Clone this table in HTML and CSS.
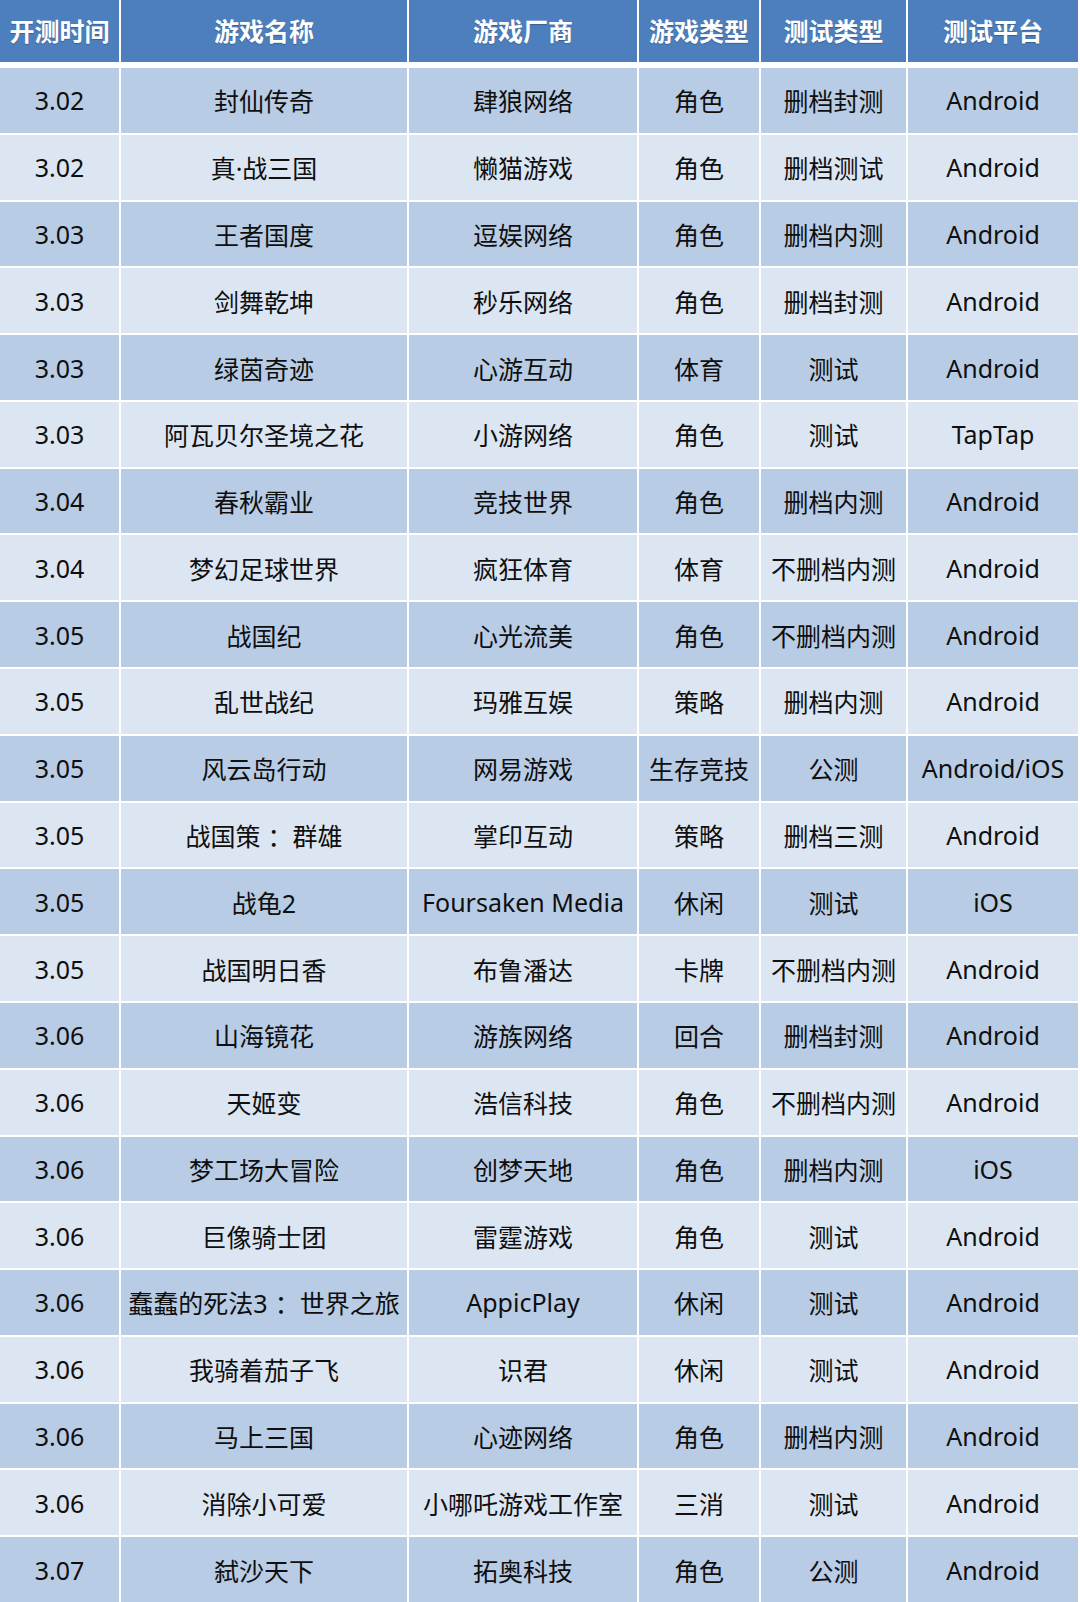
FILE: index.html
```html
<!DOCTYPE html>
<html lang="zh-CN">
<head>
<meta charset="utf-8">
<title>开测表</title>
<link rel="stylesheet" href="styles.css">
</head>
<body>
<div class="sheet">
  <div class="row head"><div>开测时间</div><div>游戏名称</div><div>游戏厂商</div><div>游戏类型</div><div>测试类型</div><div>测试平台</div></div>
  <div class="row dark"><div>3.02</div><div>封仙传奇</div><div>肆狼网络</div><div>角色</div><div>删档封测</div><div>Android</div></div>
  <div class="row light"><div>3.02</div><div>真·战三国</div><div>懒猫游戏</div><div>角色</div><div>删档测试</div><div>Android</div></div>
  <div class="row dark"><div>3.03</div><div>王者国度</div><div>逗娱网络</div><div>角色</div><div>删档内测</div><div>Android</div></div>
  <div class="row light"><div>3.03</div><div>剑舞乾坤</div><div>秒乐网络</div><div>角色</div><div>删档封测</div><div>Android</div></div>
  <div class="row dark"><div>3.03</div><div>绿茵奇迹</div><div>心游互动</div><div>体育</div><div>测试</div><div>Android</div></div>
  <div class="row light"><div>3.03</div><div>阿瓦贝尔圣境之花</div><div>小游网络</div><div>角色</div><div>测试</div><div>TapTap</div></div>
  <div class="row dark"><div>3.04</div><div>春秋霸业</div><div>竞技世界</div><div>角色</div><div>删档内测</div><div>Android</div></div>
  <div class="row light"><div>3.04</div><div>梦幻足球世界</div><div>疯狂体育</div><div>体育</div><div>不删档内测</div><div>Android</div></div>
  <div class="row dark"><div>3.05</div><div>战国纪</div><div>心光流美</div><div>角色</div><div>不删档内测</div><div>Android</div></div>
  <div class="row light"><div>3.05</div><div>乱世战纪</div><div>玛雅互娱</div><div>策略</div><div>删档内测</div><div>Android</div></div>
  <div class="row dark"><div>3.05</div><div>风云岛行动</div><div>网易游戏</div><div>生存竞技</div><div>公测</div><div>Android/iOS</div></div>
  <div class="row light"><div>3.05</div><div>战国策<span class="colon">：</span>群雄</div><div>掌印互动</div><div>策略</div><div>删档三测</div><div>Android</div></div>
  <div class="row dark"><div>3.05</div><div>战龟2</div><div>Foursaken Media</div><div>休闲</div><div>测试</div><div>iOS</div></div>
  <div class="row light"><div>3.05</div><div>战国明日香</div><div>布鲁潘达</div><div>卡牌</div><div>不删档内测</div><div>Android</div></div>
  <div class="row dark"><div>3.06</div><div>山海镜花</div><div>游族网络</div><div>回合</div><div>删档封测</div><div>Android</div></div>
  <div class="row light"><div>3.06</div><div>天姬变</div><div>浩信科技</div><div>角色</div><div>不删档内测</div><div>Android</div></div>
  <div class="row dark"><div>3.06</div><div>梦工场大冒险</div><div>创梦天地</div><div>角色</div><div>删档内测</div><div>iOS</div></div>
  <div class="row light"><div>3.06</div><div>巨像骑士团</div><div>雷霆游戏</div><div>角色</div><div>测试</div><div>Android</div></div>
  <div class="row dark"><div>3.06</div><div>蠢蠢的死法3<span class="colon">：</span>世界之旅</div><div>AppicPlay</div><div>休闲</div><div>测试</div><div>Android</div></div>
  <div class="row light"><div>3.06</div><div>我骑着茄子飞</div><div>识君</div><div>休闲</div><div>测试</div><div>Android</div></div>
  <div class="row dark"><div>3.06</div><div>马上三国</div><div>心迹网络</div><div>角色</div><div>删档内测</div><div>Android</div></div>
  <div class="row light"><div>3.06</div><div>消除小可爱</div><div>小哪吒游戏工作室</div><div>三消</div><div>测试</div><div>Android</div></div>
  <div class="row dark"><div>3.07</div><div>弑沙天下</div><div>拓奥科技</div><div>角色</div><div>公测</div><div>Android</div></div>
</div>
</body>
</html>
```

FILE: styles.css
```css
html, body {
  margin: 0;
  padding: 0;
  background: #ffffff;
}

.sheet {
  height: 1602px;
  display: flex;
  flex-direction: column;
  gap: 2px;
  font-family: "Noto Sans", "Noto Sans CJK SC", sans-serif;
  color: #0f0f0f;
  overflow: hidden;
}

.row {
  display: grid;
  grid-template-columns: 119px 286px 228px 120px 145px 170px;
  column-gap: 2px;
  padding-right: 2px;
  flex: 1 1 0;
  min-height: 0;
}

.row > div {
  display: flex;
  align-items: center;
  justify-content: center;
  white-space: nowrap;
  font-size: 25px;
}

.colon {
  display: inline-block;
  padding-left: 7px;
}

.head {
  flex: 0 0 62px;
  margin-bottom: 4px;
}

.head > div {
  background: #4d7fbe;
  color: #ffffff;
  font-weight: 700;
  font-size: 25px;
  padding-bottom: 2px;
  text-shadow: 0 1px 1px rgba(0, 0, 0, 0.25);
}

.dark > div {
  background: #b9cce5;
}

.light > div {
  background: #dce6f2;
}
```
